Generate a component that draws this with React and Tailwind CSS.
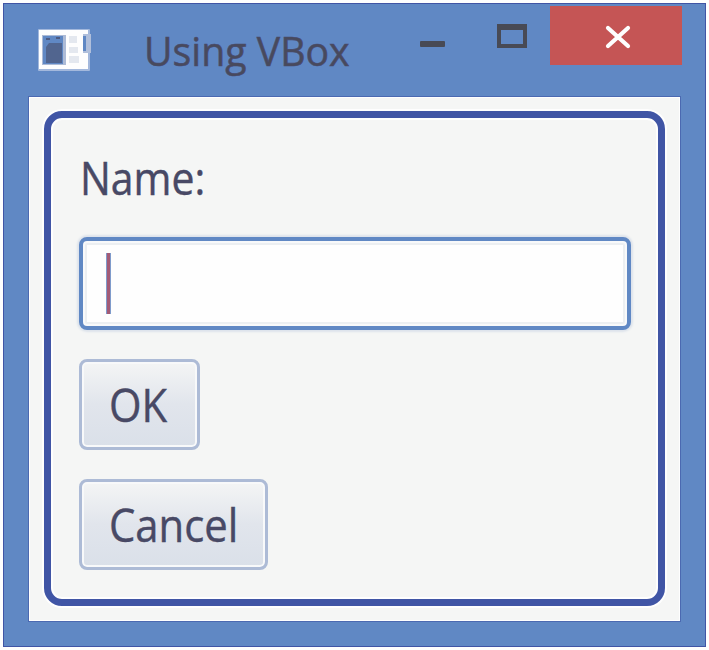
function AppIcon() {
  return (
    <svg className="mt-[22px] ml-[33px] h-[46px] w-[54px] shrink-0" viewBox="0 0 54 46">
      <rect x="1" y="3" width="52" height="42" rx="1" fill="#a3b8dc" />
      <rect x="2" y="4" width="49" height="39" fill="#fefefe" />
      <rect x="5" y="9" width="24" height="30" fill="#adbbd6" />
      <rect x="6" y="10" width="20" height="28" fill="#6088c4" />
      <path d="M9 12h4v2H9zM19 11h4v2h-4z" fill="#4c5b83" />
      <path d="M12 17h13v20H9V21z" fill="#51658f" />
      <path d="M32 10h8v7h-8zM32 21h9v6h-9zM32 30h10v7H32z" fill="#e4e8ef" />
      <rect x="46" y="8" width="8" height="19" fill="#b0bfdb" />
      <rect x="46" y="10" width="3" height="15" fill="#6088c4" />
    </svg>
  );
}

function TitleBar() {
  return (
    <header className="flex h-[92px] items-start">
      <AppIcon />
      <h1 className="mt-[14px] ml-[53px] w-[276px] origin-left scale-x-[0.957] text-[41px] leading-[64px] whitespace-nowrap text-[#484a5c] [-webkit-text-stroke:0.6px_#484a70]">
        Using VBox
      </h1>
      <button aria-label="Minimize" className="mt-[37px] h-[6px] w-[25px] shrink-0 rounded-[1px] bg-[#484a55]" />
      <button aria-label="Maximize" className="mt-[20px] ml-[52px] h-[24px] w-[30px] shrink-0 border-4 border-t-[6px] border-[#484a55]" />
      <button aria-label="Close" className="mt-[2px] ml-[23px] flex h-[59px] w-[132px] shrink-0 items-center justify-center bg-[#c55555]">
        <svg className="mt-[3px] ml-[4px] h-[24px] w-[26px]" viewBox="0 0 26 24">
          <path d="M3 3 23 21M23 3 3 21" stroke="#fefefe" strokeWidth="4.2" strokeLinecap="round" />
        </svg>
      </button>
    </header>
  );
}

function PushButton({ children, width }) {
  return (
    <button
      className={`${width} flex h-[91px] items-center rounded-[8px] border-[3px] border-[#adbbd6] bg-linear-to-b from-[#f4f5f5] via-[#e1e5ec] to-[#dae0e9] pl-[27px] shadow-[inset_0_0_0_2px_#f8f9fa]`}
    >
      <span className="origin-left scale-x-[0.93] text-[45px] leading-[60px] whitespace-nowrap [-webkit-text-stroke:0.4px_#484965]">{children}</span>
    </button>
  );
}

export default function App() {
  return (
    <div className="h-[650px] w-[709px] overflow-hidden bg-[#fefefe] pt-[3px] pl-[3px] font-['Open_Sans','Noto_Sans',sans-serif] text-[#484965]">
      <div className="h-[644px] w-[703px] border border-[#4055a5] bg-[#6088c4]">
        <TitleBar />
        <main className="ml-[24px] h-[526px] w-[653px] border border-[#4b69b1] bg-[#fefefe] p-px">
          <div className="h-full bg-[#f5f6f5] pt-[13px] pl-[14px]">
            <section className="flex h-[495px] w-[621px] flex-col items-start rounded-[18px] border-[7px] border-[#4055a5] bg-[#f5f6f5] pt-[30px] pl-[28px] shadow-[0_0_0_2px_#fefefe,inset_0_0_0_2px_#fefefe]">
              <label htmlFor="name" className="ml-px h-[60px] origin-left scale-x-[0.91] text-[45px] leading-[60px] [-webkit-text-stroke:0.4px_#484965]">
                Name:
              </label>
              <div
                id="name"
                className="mt-[29px] flex h-[93px] w-[552px] items-center rounded-[8px] border-4 border-[#6088c4] bg-[#fefefe] pl-[23px] shadow-[0_0_2px_2px_#dde3eb,inset_0_0_0_2px_#f8f9fa,inset_0_0_0_4px_#eceff2]"
              >
                <span className="h-[61px] w-[5px] border-x border-[#7f9bcb] bg-[#a35b76]" />
              </div>
              <div className="mt-[29px]">
                <PushButton width="w-[121px]">OK</PushButton>
              </div>
              <div className="mt-[29px]">
                <PushButton width="w-[189px]">Cancel</PushButton>
              </div>
            </section>
          </div>
        </main>
      </div>
    </div>
  );
}
